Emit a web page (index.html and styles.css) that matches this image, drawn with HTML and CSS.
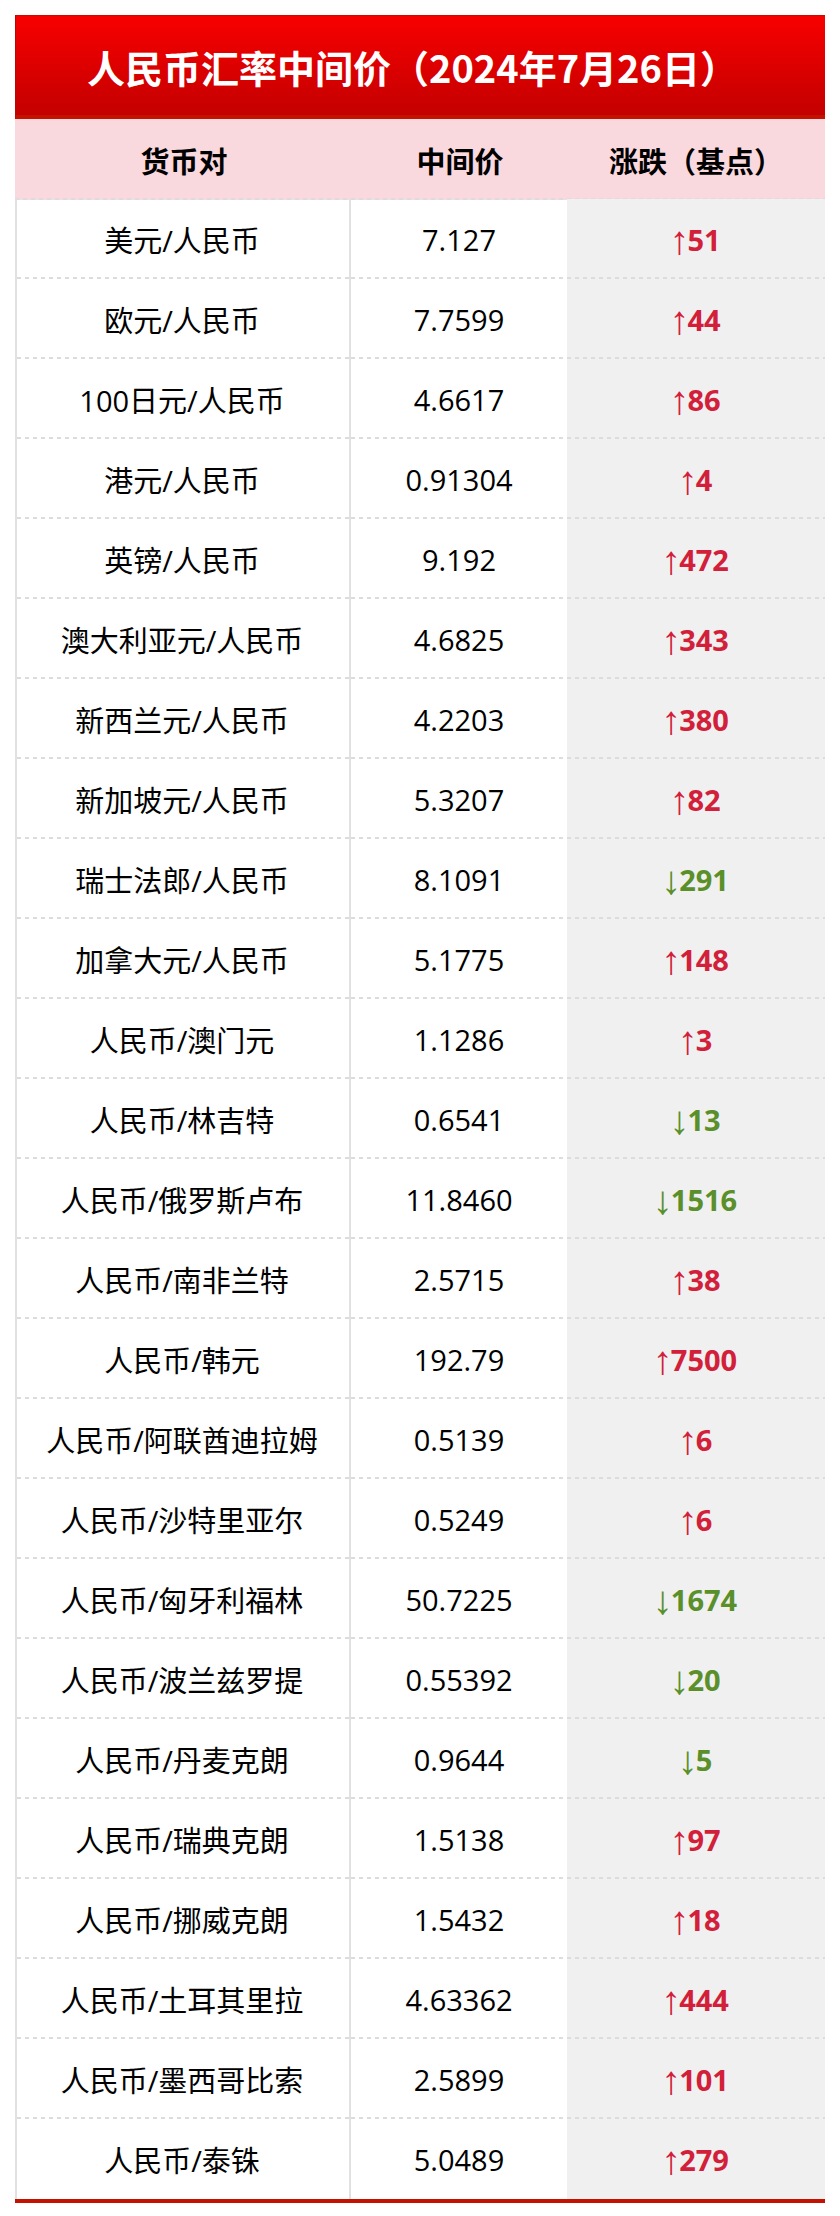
FILE: index.html
```html
<!DOCTYPE html>
<html lang="zh-CN">
<head>
<meta charset="utf-8">
<title>人民币汇率中间价</title>
<link rel="stylesheet" href="styles.css">
</head>
<body>
<div class="sheet">
  <div class="title">人民币汇率中间价（2024年7月26日）</div>
  <div class="head">
    <div class="hc">货币对</div>
    <div class="hc">中间价</div>
    <div class="hc">涨跌（基点）</div>
  </div>
  <div class="rows">
    <div class="row"><div class="c pair">美元/人民币</div><div class="c price">7.127</div><div class="c chg up"><span class="ar">↑</span>51</div></div>
    <div class="row"><div class="c pair">欧元/人民币</div><div class="c price">7.7599</div><div class="c chg up"><span class="ar">↑</span>44</div></div>
    <div class="row"><div class="c pair">100日元/人民币</div><div class="c price">4.6617</div><div class="c chg up"><span class="ar">↑</span>86</div></div>
    <div class="row"><div class="c pair">港元/人民币</div><div class="c price">0.91304</div><div class="c chg up"><span class="ar">↑</span>4</div></div>
    <div class="row"><div class="c pair">英镑/人民币</div><div class="c price">9.192</div><div class="c chg up"><span class="ar">↑</span>472</div></div>
    <div class="row"><div class="c pair">澳大利亚元/人民币</div><div class="c price">4.6825</div><div class="c chg up"><span class="ar">↑</span>343</div></div>
    <div class="row"><div class="c pair">新西兰元/人民币</div><div class="c price">4.2203</div><div class="c chg up"><span class="ar">↑</span>380</div></div>
    <div class="row"><div class="c pair">新加坡元/人民币</div><div class="c price">5.3207</div><div class="c chg up"><span class="ar">↑</span>82</div></div>
    <div class="row"><div class="c pair">瑞士法郎/人民币</div><div class="c price">8.1091</div><div class="c chg down"><span class="ar">↓</span>291</div></div>
    <div class="row"><div class="c pair">加拿大元/人民币</div><div class="c price">5.1775</div><div class="c chg up"><span class="ar">↑</span>148</div></div>
    <div class="row"><div class="c pair">人民币/澳门元</div><div class="c price">1.1286</div><div class="c chg up"><span class="ar">↑</span>3</div></div>
    <div class="row"><div class="c pair">人民币/林吉特</div><div class="c price">0.6541</div><div class="c chg down"><span class="ar">↓</span>13</div></div>
    <div class="row"><div class="c pair">人民币/俄罗斯卢布</div><div class="c price">11.8460</div><div class="c chg down"><span class="ar">↓</span>1516</div></div>
    <div class="row"><div class="c pair">人民币/南非兰特</div><div class="c price">2.5715</div><div class="c chg up"><span class="ar">↑</span>38</div></div>
    <div class="row"><div class="c pair">人民币/韩元</div><div class="c price">192.79</div><div class="c chg up"><span class="ar">↑</span>7500</div></div>
    <div class="row"><div class="c pair">人民币/阿联酋迪拉姆</div><div class="c price">0.5139</div><div class="c chg up"><span class="ar">↑</span>6</div></div>
    <div class="row"><div class="c pair">人民币/沙特里亚尔</div><div class="c price">0.5249</div><div class="c chg up"><span class="ar">↑</span>6</div></div>
    <div class="row"><div class="c pair">人民币/匈牙利福林</div><div class="c price">50.7225</div><div class="c chg down"><span class="ar">↓</span>1674</div></div>
    <div class="row"><div class="c pair">人民币/波兰兹罗提</div><div class="c price">0.55392</div><div class="c chg down"><span class="ar">↓</span>20</div></div>
    <div class="row"><div class="c pair">人民币/丹麦克朗</div><div class="c price">0.9644</div><div class="c chg down"><span class="ar">↓</span>5</div></div>
    <div class="row"><div class="c pair">人民币/瑞典克朗</div><div class="c price">1.5138</div><div class="c chg up"><span class="ar">↑</span>97</div></div>
    <div class="row"><div class="c pair">人民币/挪威克朗</div><div class="c price">1.5432</div><div class="c chg up"><span class="ar">↑</span>18</div></div>
    <div class="row"><div class="c pair">人民币/土耳其里拉</div><div class="c price">4.63362</div><div class="c chg up"><span class="ar">↑</span>444</div></div>
    <div class="row"><div class="c pair">人民币/墨西哥比索</div><div class="c price">2.5899</div><div class="c chg up"><span class="ar">↑</span>101</div></div>
    <div class="row"><div class="c pair">人民币/泰铢</div><div class="c price">5.0489</div><div class="c chg up"><span class="ar">↑</span>279</div></div>
  </div>
</div>
</body>
</html>
```
FILE: styles.css
```css
html, body {
  margin: 0;
  padding: 0;
  background: #ffffff;
}
body {
  font-family: "Open Sans", "Noto Sans CJK SC", sans-serif;
  color: #000000;
}
.sheet {
  width: 810px;
  margin: 15px 0 0 15px;
}
.title {
  box-sizing: border-box;
  height: 104px;
  border-top: 1px solid #d00800;
  border-left: 1px solid #b80800;
  border-bottom: 4px solid #c41200;
  background: linear-gradient(to bottom, #f80000 0%, #e00000 45%, #c40000 100%);
  color: #ffffff;
  font-family: "Noto Sans CJK SC", sans-serif;
  font-weight: 700;
  font-size: 38px;
  display: flex;
  align-items: center;
  justify-content: center;
  padding-right: 16px;
  padding-top: 2px;
}
.head {
  height: 81px;
  background-color: #f9d9dd;
  display: grid;
  grid-template-columns: 338px 214px 258px;
  align-items: center;
  font-family: "Noto Sans CJK SC", sans-serif;
  font-weight: 700;
  font-size: 29px;
  background-image: linear-gradient(to right, #dcdcdc 0 4px, transparent 4px 8px);
  background-size: 8px 2px;
  background-repeat: repeat-x;
  background-position: 0 bottom;
}
.hc {
  text-align: center;
}
.rows {
  border-bottom: 4px solid #c41200;
  margin-top: -1px;
}
.row {
  display: grid;
  grid-template-columns: 336px 216px 258px;
  height: 80px;
}
.c {
  display: flex;
  align-items: center;
  justify-content: center;
  font-size: 29px;
  background-image: linear-gradient(to right, #dcdcdc 0 4px, transparent 4px 8px);
  background-size: 8px 2px;
  background-repeat: repeat-x;
  background-position: 0 bottom;
}
.row:last-child .c {
  background-image: none;
}
.pair {
  border-left: 2px solid #e1e1e1;
  border-right: 2px solid #e1e1e1;
  padding-right: 2px;
}
.chg {
  background-color: #f0f0f0;
  font-weight: 700;
  line-height: 1;
}
.up {
  color: #d2203a;
}
.down {
  color: #5a8f2a;
}
.ar {
  font-family: "Liberation Sans", "DejaVu Sans", sans-serif;
  font-weight: 400;
  font-size: 40px;
  line-height: 1;
  margin-left: -2px;
  margin-right: -2px;
  position: relative;
  top: 1px;
}
```
